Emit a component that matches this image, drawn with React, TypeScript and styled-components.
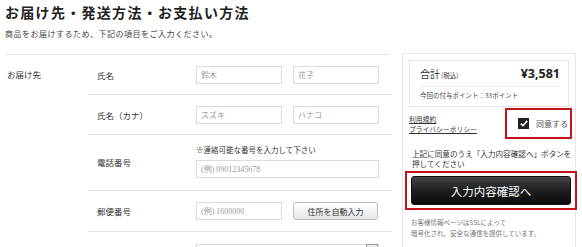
import { FC } from 'react'
import styled, { createGlobalStyle } from 'styled-components'

const GlobalStyle = createGlobalStyle`
  html, body {
    margin: 0;
    padding: 0;
    background: #fff;
    overflow: hidden;
  }
  body {
    font-family: 'Noto Sans CJK JP', 'Noto Sans', sans-serif;
    color: #333;
  }
`

const Page = styled.div`
  display: flex;
  align-items: flex-start;
  padding-left: 5px;
  width: 582px;
  height: 247px;
  box-sizing: border-box;
  overflow: hidden;
`

const MainCol = styled.div`
  width: 387px;
  flex-shrink: 0;
`

const Header = styled.div`
  padding: 2px 0 15px;
  border-bottom: 1px solid #e3e3e3;
  margin-right: 2px;
`

const Title = styled.h1`
  margin: 0;
  font-size: 14px;
  line-height: 20px;
  font-weight: 700;
  letter-spacing: 1.3px;
  color: #222;
`

const Lead = styled.p`
  margin: 6px 0 0;
  font-size: 8px;
  line-height: 11px;
  letter-spacing: 0.5px;
  color: #444;
`

const Section = styled.div`
  display: flex;
`

const SectionLabel = styled.div`
  width: 81px;
  padding: 13px 0 0 2px;
  font-size: 8.5px;
  line-height: 12px;
  color: #333;
`

const Rows = styled.div`
  width: 304px;
`

const Row = styled.div<{ $pad?: string }>`
  display: flex;
  align-items: center;
  padding: ${(p) => p.$pad || '0'};
  border-bottom: 1px solid #e2e2e2;
`

const RowLabel = styled.div`
  width: 99px;
  padding-left: 9px;
  flex-shrink: 0;
  font-size: 8.5px;
  line-height: 12px;
  color: #333;
`

const Field = styled.div`
  display: flex;
  flex-direction: column;
`

const Inline = styled.div`
  display: flex;
  align-items: center;
  gap: 11px;
`

const Note = styled.div`
  font-size: 7.5px;
  line-height: 10px;
  color: #333;
  margin-bottom: 5px;
`

const TextInput = styled.input<{ $w: number }>`
  width: ${(p) => p.$w}px;
  height: 18px;
  box-sizing: border-box;
  border: 1px solid #dcdcdc;
  padding: 0 4px;
  margin: 0;
  font-family: 'Liberation Serif', 'Noto Sans CJK JP', serif;
  font-size: 8px;
  color: #333;
  outline: none;
  &::placeholder {
    color: #9a9a9a;
  }
`

const AutoButton = styled.button`
  width: 85px;
  height: 18px;
  margin: 0;
  padding: 0;
  border: 1px solid #bdbdbd;
  border-radius: 3px;
  background: linear-gradient(#ffffff, #e6e6e6);
  font-family: 'Noto Sans CJK JP', sans-serif;
  font-size: 8px;
  color: #333;
`

const SelectBox = styled.div`
  position: relative;
  width: 183px;
  height: 18px;
  box-sizing: border-box;
  border: 1px solid #dcdcdc;
`

const SelectKnob = styled.span`
  position: absolute;
  right: 0;
  top: -1px;
  width: 10px;
  height: 10px;
  border: 1px solid #9a9a9a;
  background: #eee;
`

const Aside = styled.aside`
  width: 174px;
  height: 194px;
  margin: 53px 0 0 10px;
  box-sizing: border-box;
  border: 1px solid #e6e6e6;
  border-bottom: none;
  padding: 6px 6px 0 6px;
`

const TotalBox = styled.div`
  border: 1px solid #e6e6e6;
  padding: 0 8px 0 10px;
`

const TotalRow = styled.div`
  display: flex;
  justify-content: space-between;
  align-items: center;
  height: 25px;
  border-bottom: 1px solid #ececec;
`

const TotalLabel = styled.span`
  font-size: 10px;
  color: #333;
  small {
    font-size: 6.5px;
    margin-left: 1px;
  }
`

const Price = styled.span`
  font-family: 'Open Sans', 'Noto Sans', sans-serif;
  font-weight: 700;
  font-size: 12.5px;
  color: #222;
`

const Points = styled.div`
  padding: 3px 0 6px;
  font-size: 6.5px;
  line-height: 10px;
  color: #444;
`

const TermsRow = styled.div`
  display: flex;
  justify-content: space-between;
  align-items: center;
  margin-top: 1px;
  margin-right: -3px;
`

const Links = styled.div`
  display: flex;
  flex-direction: column;
  a {
    font-size: 6.8px;
    line-height: 10px;
    color: #333;
    text-decoration: underline;
  }
`

const AgreeBox = styled.label`
  display: flex;
  align-items: center;
  gap: 7px;
  width: 67px;
  height: 31px;
  box-sizing: border-box;
  border: 2px solid #c3161c;
  padding-left: 11px;
  font-size: 8px;
  color: #555;
`

const CheckMark = styled.span`
  display: flex;
  align-items: center;
  justify-content: center;
  width: 11px;
  height: 11px;
  background: #222;
`

const Guide = styled.p`
  margin: 10px -4px 0 3px;
  font-size: 7.6px;
  line-height: 10px;
  color: #333;
  span {
    white-space: nowrap;
  }
`

const ButtonFrame = styled.div`
  margin: 2px -8px 0 -4px;
  border: 2px solid #c3161c;
  padding: 3px 4px;
`

const ConfirmButton = styled.button`
  display: block;
  width: 100%;
  height: 29px;
  margin: 0;
  border: 1px solid #111;
  border-radius: 3px;
  background: linear-gradient(#444 0%, #1e1e1e 50%, #0a0a0a 100%);
  font-family: 'Noto Sans CJK JP', sans-serif;
  font-size: 11.5px;
  color: #fff;
`

const Secure = styled.p`
  margin: 7px 0 0 2px;
  font-size: 6.5px;
  line-height: 11px;
  color: #777;
`

const nameRows: { label: string; first: string; last: string }[] = [
  { label: '氏名', first: '鈴木', last: '花子' },
  { label: '氏名（カナ）', first: 'スズキ', last: 'ハナコ' },
]

const OrderSummary: FC<{ total: string; points: number }> = ({ total, points }) => (
  <Aside>
    <TotalBox>
      <TotalRow>
        <TotalLabel>
          合計<small>(税込)</small>
        </TotalLabel>
        <Price>{total}</Price>
      </TotalRow>
      <Points>今回の付与ポイント：{points}ポイント</Points>
    </TotalBox>
    <TermsRow>
      <Links>
        <a>利用規約</a>
        <a>プライバシーポリシー</a>
      </Links>
      <AgreeBox>
        <CheckMark>
          <svg width="8" height="7" viewBox="0 0 8 7">
            <path d="M0.8 3.6 L3 5.7 L7.2 0.9" fill="none" stroke="#fff" strokeWidth="1.6" />
          </svg>
        </CheckMark>
        同意する
      </AgreeBox>
    </TermsRow>
    <Guide>
      <span>上記に同意のうえ「入力内容確認へ」ボタンを</span>
      <br />
      押してください
    </Guide>
    <ButtonFrame>
      <ConfirmButton>入力内容確認へ</ConfirmButton>
    </ButtonFrame>
    <Secure>
      お客様情報ページはSSLによって
      <br />
      暗号化され、安全な通信を提供しています。
    </Secure>
  </Aside>
)

export default function App() {
  return (
    <>
      <GlobalStyle />
      <Page>
        <MainCol>
          <Header>
            <Title>お届け先・発送方法・お支払い方法</Title>
            <Lead>商品をお届けするため、下記の項目をご入力ください。</Lead>
          </Header>
          <Section>
            <SectionLabel>お届け先</SectionLabel>
            <Rows>
              {nameRows.map((r) => (
                <Row key={r.label} $pad="11px 0 10px">
                  <RowLabel>{r.label}</RowLabel>
                  <Inline>
                    <TextInput $w={86} placeholder={r.first} />
                    <TextInput $w={86} placeholder={r.last} />
                  </Inline>
                </Row>
              ))}
              <Row $pad="10px 0 12px">
                <RowLabel>電話番号</RowLabel>
                <Field>
                  <Note>※連絡可能な番号を入力して下さい</Note>
                  <TextInput $w={183} placeholder="(例) 09012345678" />
                </Field>
              </Row>
              <Row $pad="11px 0 11px">
                <RowLabel>郵便番号</RowLabel>
                <Inline>
                  <TextInput $w={86} placeholder="(例) 1600000" />
                  <AutoButton>住所を自動入力</AutoButton>
                </Inline>
              </Row>
              <Row $pad="12px 0 12px">
                <RowLabel />
                <SelectBox>
                  <SelectKnob />
                </SelectBox>
              </Row>
            </Rows>
          </Section>
        </MainCol>
        <OrderSummary total="¥3,581" points={33} />
      </Page>
    </>
  )
}
